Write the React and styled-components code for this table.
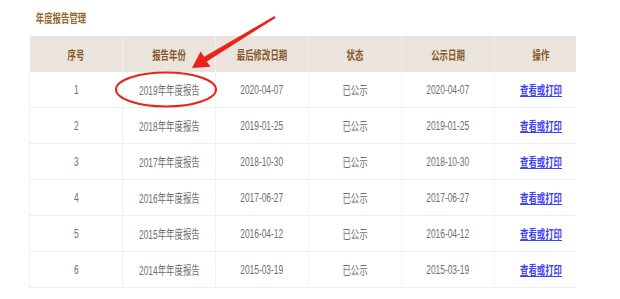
import styled, { createGlobalStyle } from 'styled-components';

const reports = [
  { id: 1, year: '2019年年度报告', modified: '2020-04-07', published: '2020-04-07' },
  { id: 2, year: '2018年年度报告', modified: '2019-01-25', published: '2019-01-25' },
  { id: 3, year: '2017年年度报告', modified: '2018-10-30', published: '2018-10-30' },
  { id: 4, year: '2016年年度报告', modified: '2017-06-27', published: '2017-06-27' },
  { id: 5, year: '2015年年度报告', modified: '2016-04-12', published: '2016-04-12' },
  { id: 6, year: '2014年年度报告', modified: '2015-03-19', published: '2015-03-19' },
];

const columns = ['序号', '报告年份', '最后修改日期', '状态', '公示日期', '操作'];

export default function App() {
  return (
    <Page>
      <GlobalStyle />
      <Title>
        <Narrow>年度报告管理</Narrow>
      </Title>

      <TableClip>
        <Table>
          <thead>
            <tr>
              {columns.map((col) => (
                <Th key={col}>
                  <Narrow>{col}</Narrow>
                </Th>
              ))}
            </tr>
          </thead>
          <tbody>
            {reports.map((r) => (
              <tr key={r.id}>
                <Td><Narrow>{r.id}</Narrow></Td>
                <Td><Narrow>{r.year}</Narrow></Td>
                <Td><Narrow>{r.modified}</Narrow></Td>
                <Td><Narrow>已公示</Narrow></Td>
                <Td><Narrow>{r.published}</Narrow></Td>
                <Td>
                  <Link href="#">查看或打印</Link>
                </Td>
              </tr>
            ))}
          </tbody>
        </Table>
      </TableClip>

      {/* red annotation drawn over the screenshot */}
      <Markup width="620" height="299" viewBox="0 0 620 299">
        <polygon
          points="275.6,17.9 274.4,16.1 204.2,56.8 200.6,51.4 192,68 210.4,66.8 206.8,61.4"
          fill="#e8231c"
        />
        <ellipse cx="166" cy="89.5" rx="50" ry="17" fill="none" stroke="#e8231c" strokeWidth="2" />
      </Markup>
    </Page>
  );
}

const GlobalStyle = createGlobalStyle`
  html, body {
    margin: 0;
    padding: 0;
    background: #fff;
  }

  body {
    font-family: "Liberation Sans", "Noto Sans CJK SC", sans-serif;
  }
`;

const Page = styled.div`
  position: relative;
  width: 620px;
  height: 299px;
  overflow: hidden;
  padding: 11px 0 0 25px;
  box-sizing: border-box;
`;

const Title = styled.div`
  height: 16px;
  line-height: 16px;
  font-size: 12px;
  font-weight: bold;
  color: #93672f;
  margin-bottom: 9px;
`;

const Narrow = styled.span`
  display: inline-block;
  transform: scaleX(0.7);
  white-space: nowrap;
`;

const TableClip = styled.div`
  width: 547px;
  margin-left: 4px;
  overflow: hidden;
`;

const Table = styled.table`
  width: 558px;
  border-collapse: collapse;
  table-layout: fixed;
  font-size: 12px;
`;

const Th = styled.th`
  height: 36px;
  padding: 0;
  background: #ebe4dc;
  color: #84592a;
  font-weight: bold;
  text-align: center;
  border-left: 1px solid #f3efea;

  &:first-child {
    border-left: none;
  }
`;

const Td = styled.td`
  height: 35px;
  padding: 0;
  color: #6e6e6e;
  text-align: center;
  border-left: 1px solid #f2f2f2;
  border-bottom: 1px solid #efefef;

  &:first-child {
    border-left: 1px solid #f4f4f4;
  }
`;

const Link = styled.a`
  display: inline-block;
  transform: scaleX(0.7);
  white-space: nowrap;
  color: #4141f5;
  font-weight: bold;
  text-decoration: underline;
`;

const Markup = styled.svg`
  position: absolute;
  top: 0;
  left: 0;
  pointer-events: none;
`;
